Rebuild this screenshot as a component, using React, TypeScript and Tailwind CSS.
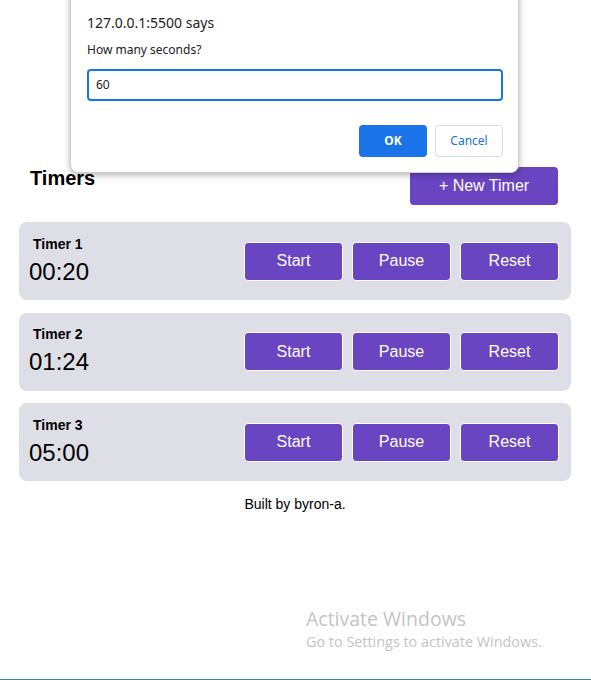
import React from "react";

const timers = [
  { name: "Timer 1", time: "00:20" },
  { name: "Timer 2", time: "01:24" },
  { name: "Timer 3", time: "05:00" },
];

function TimerCard({ name, time }: { name: string; time: string }) {
  return (
    <div className="flex items-center justify-between rounded-lg bg-[#dedee6] pl-[14px] pr-[12px] h-[78px]">
      <div className="flex flex-col -mt-[1px]">
        <span className="text-[14px] font-bold leading-[16px] text-black">{name}</span>
        <span className="mt-[6px] -ml-[4px] text-[24px] leading-[28px] text-black">{time}</span>
      </div>
      <div className="flex gap-[9px]">
        {["Start", "Pause", "Reset"].map((label) => (
          <button
            key={label}
            className="h-[39px] w-[99px] rounded-[4px] border border-white bg-[#6a45c2] text-[16px] text-white"
          >
            {label}
          </button>
        ))}
      </div>
    </div>
  );
}

export default function App() {
  return (
    <div className="relative h-[680px] w-full overflow-hidden bg-white font-['Liberation_Sans',Arial,sans-serif]">
      <div className="ml-[19px] w-[552px] pt-[167px]">
        <div className="flex items-start justify-between pl-[11px] pr-[13px]">
          <h1 className="text-[20px] font-bold leading-[22px] text-black">Timers</h1>
          <button className="h-[38px] w-[148px] rounded-[4px] bg-[#6a45c2] text-[16px] text-white">
            + New Timer
          </button>
        </div>

        <div className="mt-[17px] flex flex-col gap-[12.5px]">
          {timers.map((t) => (
            <TimerCard key={t.name} {...t} />
          ))}
        </div>

        <p className="mt-[13px] text-center text-[14px] text-black">Built by byron-a.</p>
      </div>

      {/* browser prompt dialog */}
      <div className="absolute left-[70px] top-[-10px] w-[449px] rounded-b-[8px] border border-[#d0d0d0] bg-white pl-[16px] pr-[15px] pb-[15px] pt-[23px] shadow-[0_2px_6px_rgba(0,0,0,0.3)] font-['Noto_Sans',sans-serif]">
        <div className="text-[14px] leading-[18px] text-[#202124]">127.0.0.1:5500 says</div>
        <div className="mt-[10px] text-[12px] leading-[16px] text-[#202124]">How many seconds?</div>
        <div className="mt-[11px] flex h-[32px] items-center rounded-[4px] border-2 border-[#1a73e8] px-[7px] text-[12px] text-[#202124]">
          60
        </div>
        <div className="mt-[24px] flex justify-end gap-[8px]">
          <button className="h-[32px] w-[68px] rounded-[4px] bg-[#1a73e8] text-[12px] font-bold text-white">OK</button>
          <button className="h-[32px] w-[68px] rounded-[4px] border border-[#dadce0] bg-white text-[12px] text-[#1a73e8]">
            Cancel
          </button>
        </div>
      </div>

      {/* windows watermark */}
      <div className="absolute left-[306px] top-[606px] font-['Open_Sans',sans-serif] text-[#c4c4c4]">
        <div className="text-[19.5px] leading-[26px]">Activate Windows</div>
        <div className="text-[14.4px] leading-[20px]">Go to Settings to activate Windows.</div>
      </div>
      <div className="absolute bottom-0 left-0 h-[1px] w-full bg-[#3a8aa0]" />
    </div>
  );
}
